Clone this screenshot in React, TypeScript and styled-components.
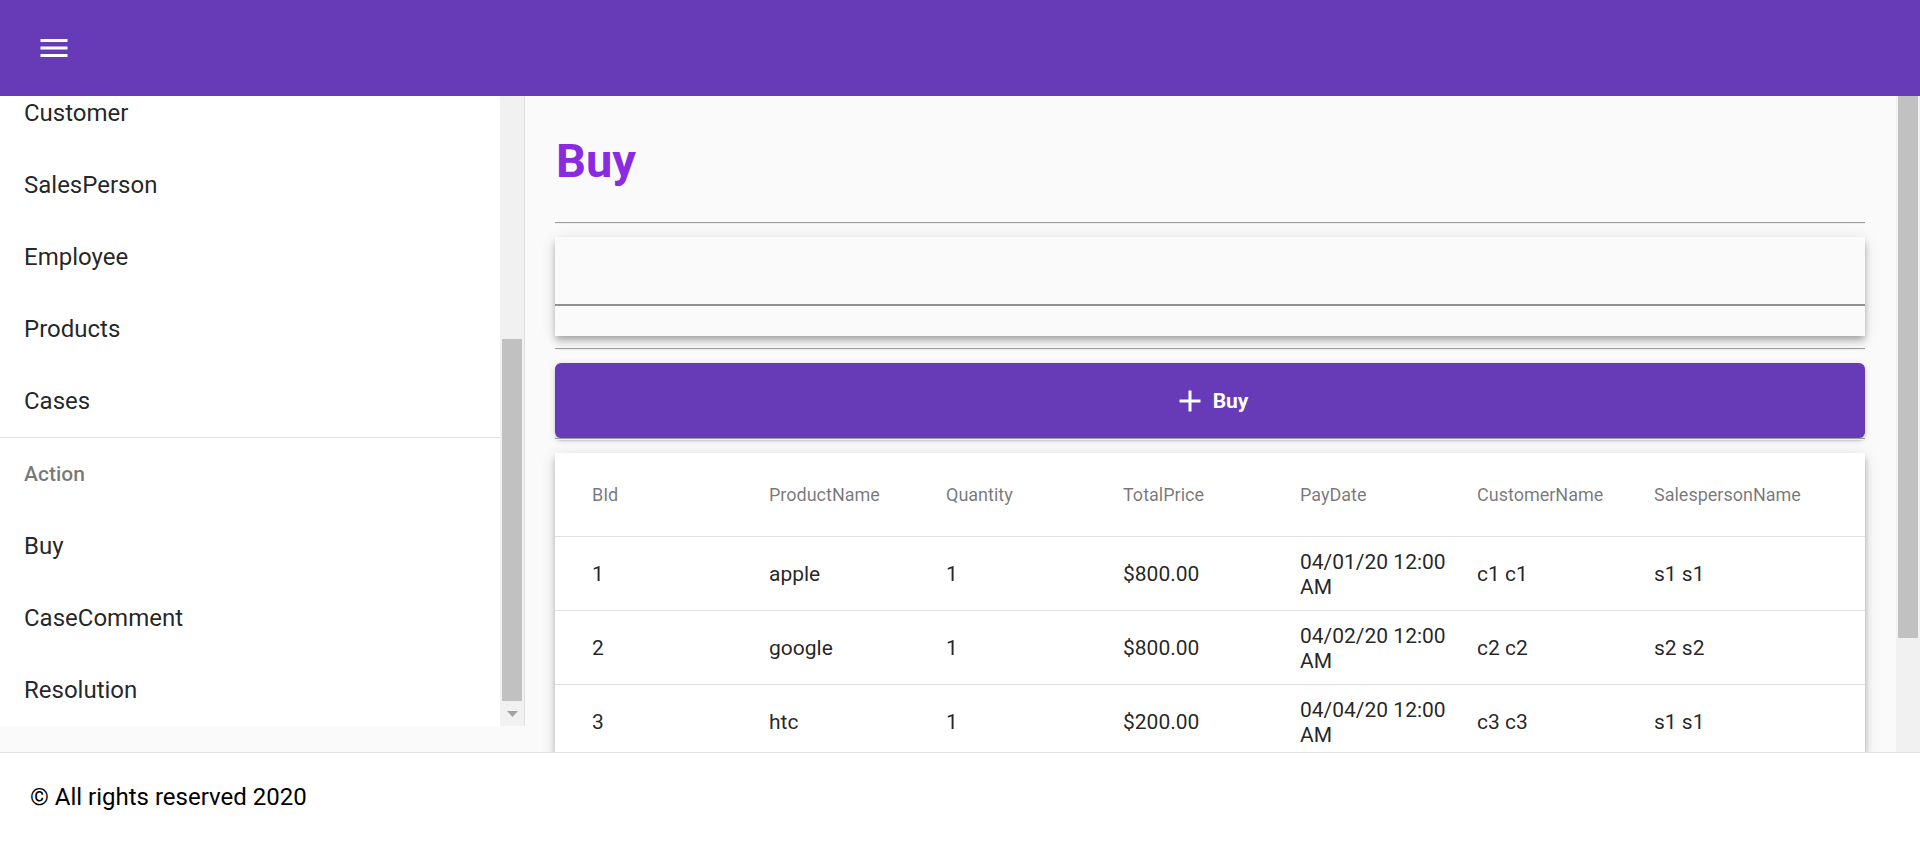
import React from "react";
import styled, { createGlobalStyle } from "styled-components";

const GlobalStyle = createGlobalStyle`
  html, body { margin: 0; padding: 0; overflow: hidden; }
  body {
    font-family: Roboto, "Liberation Sans", Arial, sans-serif;
    background: #fafafa;
    -webkit-font-smoothing: antialiased;
  }
  * { box-sizing: border-box; }
`;

const Page = styled.div`
  display: flex;
  flex-direction: column;
  width: 1920px;
  height: 841px;
`;

const AppBar = styled.header`
  flex: 0 0 96px;
  height: 96px;
  background: #673ab7;
  display: flex;
  align-items: center;
  padding-left: 36px;
`;

const IconButton = styled.button`
  width: 36px;
  height: 36px;
  padding: 0;
  border: 0;
  background: transparent;
  color: #fff;
  display: flex;
  align-items: center;
  justify-content: center;
  cursor: pointer;
`;

const Body = styled.div`
  flex: 1;
  min-height: 0;
  display: flex;
  background: #fafafa;
`;

const Drawer = styled.nav`
  flex: 0 0 525px;
  width: 525px;
  height: 630px;
  background: #fff;
  border-right: 1px solid #e0e0e0;
  display: flex;
  overflow: hidden;
`;

const NavViewport = styled.div`
  flex: 1;
  overflow: hidden;
`;

const NavList = styled.ul`
  list-style: none;
  margin: -19px 0 0;
  padding: 0;
`;

const NavItem = styled.li`
  height: 72px;
  display: flex;
  align-items: center;
  padding-left: 24px;
  font-size: 24px;
  line-height: 36px;
  color: rgba(0, 0, 0, 0.87);
`;

const NavDivider = styled.li`
  height: 1px;
  background: #e0e0e0;
`;

const NavSubheader = styled.li`
  height: 72px;
  display: flex;
  align-items: center;
  padding-left: 24px;
  font-size: 21px;
  font-weight: 500;
  color: rgba(0, 0, 0, 0.54);
`;

const ScrollTrack = styled.div`
  flex: 0 0 24px;
  width: 24px;
  background: #f1f1f1;
  display: flex;
  flex-direction: column;
`;

const ScrollSpacer = styled.div<{ $h: number }>`
  flex: 0 0 ${(p) => p.$h}px;
`;

const ScrollThumb = styled.div<{ $h: number }>`
  flex: 0 0 ${(p) => p.$h}px;
  margin: 0 2px;
  background: #c1c1c1;
`;

const ScrollArrow = styled.div`
  flex: 1;
  display: flex;
  align-items: center;
  justify-content: center;
`;

const Main = styled.main`
  flex: 1;
  min-width: 0;
  display: flex;
`;

const MainContent = styled.div`
  flex: 1;
  min-width: 0;
  overflow: hidden;
  padding: 30px 31px 0 30px;
  display: flex;
  flex-direction: column;
`;

const PageTitle = styled.h1`
  margin: 3px 0 30px 1px;
  font-size: 47px;
  line-height: 63px;
  font-weight: 700;
  color: #8a2be2;
`;

const Rule = styled.hr<{ $mb: number }>`
  flex: 0 0 auto;
  margin: 0 0 ${(p) => p.$mb}px;
  height: 0;
  border: 0;
  border-top: 1px solid #9e9e9e;
  border-bottom: 1px solid #ececec;
`;

const FormPaper = styled.section`
  flex: 0 0 99px;
  height: 99px;
  margin-bottom: 12px;
  background: #fafafa;
  box-shadow: 0 3px 6px -1.5px rgba(0, 0, 0, 0.2), 0 6px 7.5px 0 rgba(0, 0, 0, 0.14),
    0 1.5px 15px 0 rgba(0, 0, 0, 0.12);
`;

const FieldLine = styled.div`
  height: 69px;
  border-bottom: 2px solid rgba(0, 0, 0, 0.42);
`;

const PrimaryButton = styled.button`
  flex: 0 0 75px;
  height: 75px;
  width: 100%;
  padding: 0;
  border: 0;
  border-radius: 6px;
  background: #673ab7;
  color: #fff;
  display: flex;
  align-items: center;
  justify-content: center;
  gap: 5px;
  font-family: Roboto, "Liberation Sans", Arial, sans-serif;
  font-size: 21px;
  font-weight: 700;
  cursor: pointer;
  box-shadow: 0 4.5px 1.5px -3px rgba(0, 0, 0, 0.2), 0 3px 3px 0 rgba(0, 0, 0, 0.14),
    0 1.5px 7.5px 0 rgba(0, 0, 0, 0.12);
`;

const TablePaper = styled.section`
  flex: 0 0 auto;
  background: #fff;
  box-shadow: 0 3px 6px -1.5px rgba(0, 0, 0, 0.2), 0 6px 7.5px 0 rgba(0, 0, 0, 0.14),
    0 1.5px 15px 0 rgba(0, 0, 0, 0.12);
`;

const Row = styled.div<{ $head?: boolean }>`
  display: grid;
  grid-template-columns: repeat(7, 177px);
  align-items: center;
  padding-left: 37px;
  min-height: ${(p) => (p.$head ? 84 : 74)}px;
  border-bottom: 1px solid #e0e0e0;
`;

const Cell = styled.div<{ $head?: boolean }>`
  padding-right: 16px;
  padding-top: ${(p) => (p.$head ? 0 : 2)}px;
  font-size: ${(p) => (p.$head ? 18 : 21)}px;
  line-height: 25px;
  color: ${(p) => (p.$head ? "rgba(0,0,0,0.54)" : "rgba(0,0,0,0.87)")};
`;

const Footer = styled.footer`
  flex: 0 0 89px;
  height: 89px;
  background: #fff;
  border-top: 1px solid #e0e0e0;
  display: flex;
  align-items: center;
  padding-left: 30px;
  font-size: 24px;
  color: #000;
`;

const MenuIcon = () => (
  <svg width="36" height="36" viewBox="0 0 24 24" fill="currentColor">
    <path d="M3 18h18v-2H3v2zm0-5h18v-2H3v2zm0-7v2h18V6H3z" />
  </svg>
);

const AddIcon = () => (
  <svg width="36" height="36" viewBox="0 0 24 24" fill="currentColor">
    <path d="M19 13h-6v6h-2v-6H5v-2h6V5h2v6h6v2z" />
  </svg>
);

const DownArrow = () => (
  <svg width="11" height="6" viewBox="0 0 11 6">
    <polygon points="0,0 11,0 5.5,6" fill="#a3a3a3" />
  </svg>
);

const headers = [
  "BId",
  "ProductName",
  "Quantity",
  "TotalPrice",
  "PayDate",
  "CustomerName",
  "SalespersonName",
];

const rows = [
  ["1", "apple", "1", "$800.00", "04/01/20 12:00 AM", "c1 c1", "s1 s1"],
  ["2", "google", "1", "$800.00", "04/02/20 12:00 AM", "c2 c2", "s2 s2"],
  ["3", "htc", "1", "$200.00", "04/04/20 12:00 AM", "c3 c3", "s1 s1"],
];

const masterItems = ["Customer", "SalesPerson", "Employee", "Products", "Cases"];
const actionItems = ["Buy", "CaseComment", "Resolution"];

export default function App() {
  return (
    <>
      <GlobalStyle />
      <Page>
        <AppBar>
          <IconButton aria-label="menu">
            <MenuIcon />
          </IconButton>
        </AppBar>
        <Body>
          <Drawer>
            <NavViewport>
              <NavList>
                {masterItems.map((t) => (
                  <NavItem key={t}>{t}</NavItem>
                ))}
                <NavDivider />
                <NavSubheader>Action</NavSubheader>
                {actionItems.map((t) => (
                  <NavItem key={t}>{t}</NavItem>
                ))}
              </NavList>
            </NavViewport>
            <ScrollTrack>
              <ScrollSpacer $h={243} />
              <ScrollThumb $h={362} />
              <ScrollArrow>
                <DownArrow />
              </ScrollArrow>
            </ScrollTrack>
          </Drawer>
          <Main>
            <MainContent>
              <PageTitle>Buy</PageTitle>
              <Rule $mb={13} />
              <FormPaper>
                <FieldLine />
              </FormPaper>
              <Rule $mb={13} />
              <PrimaryButton>
                <AddIcon />
                <span>Buy</span>
              </PrimaryButton>
              <Rule $mb={13} />
              <TablePaper>
                <Row $head>
                  {headers.map((h) => (
                    <Cell $head key={h}>
                      {h}
                    </Cell>
                  ))}
                </Row>
                {rows.map((r) => (
                  <Row key={r[0]}>
                    {r.map((c, i) => (
                      <Cell key={i}>{c}</Cell>
                    ))}
                  </Row>
                ))}
              </TablePaper>
            </MainContent>
            <ScrollTrack>
              <ScrollThumb $h={542} />
            </ScrollTrack>
          </Main>
        </Body>
        <Footer>© All rights reserved 2020</Footer>
      </Page>
    </>
  );
}
